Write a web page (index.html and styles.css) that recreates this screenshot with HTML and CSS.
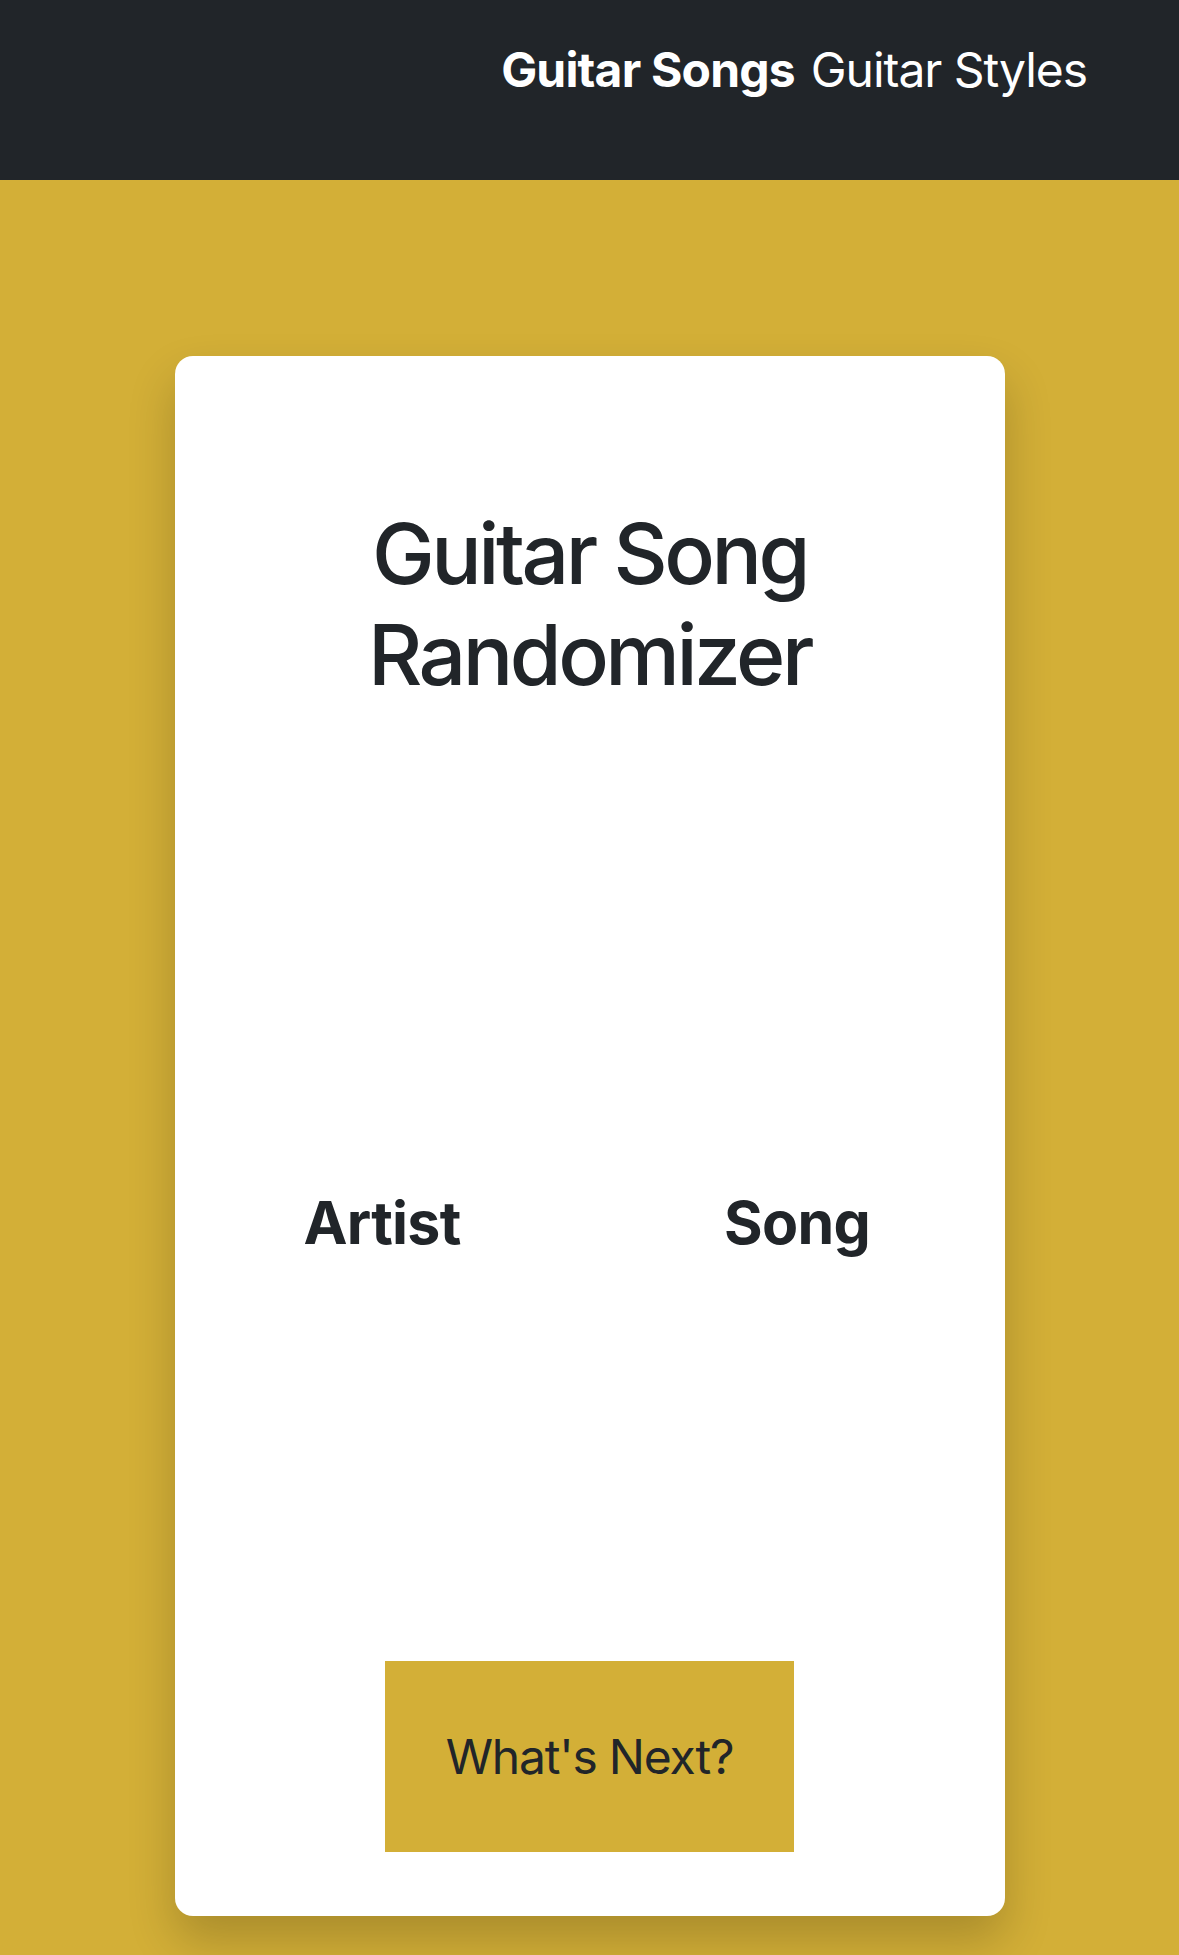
FILE: index.html
```html
<!DOCTYPE html>
<html lang="en">
<head>
<meta charset="utf-8">
<title>Guitar Song Randomizer</title>
<link rel="stylesheet" href="styles.css">
</head>
<body>
<nav class="navbar">
  <a class="brand" href="#">Guitar Songs</a>
  <a class="nav-link" href="#">Guitar Styles</a>
</nav>
<main class="page">
  <section class="card">
    <h1 class="title">Guitar Song Randomizer</h1>
    <div class="result-row">
      <h4 class="result">Artist</h4>
      <h4 class="result">Song</h4>
    </div>
    <button class="next-btn" type="button">What's Next?</button>
  </section>
</main>
</body>
</html>
```
FILE: styles.css
```css
* { box-sizing: border-box; }
html, body {
  margin: 0;
  padding: 0;
}
body {
  background: #d3af37;
  font-family: Inter, "Noto Sans", sans-serif;
  color: #212529;
  min-height: 1955px;
}
.navbar {
  background: #212529;
  height: 180px;
  display: flex;
  justify-content: flex-end;
  align-items: flex-start;
  gap: 16px;
  padding: 34px 92px 0 0;
}
.navbar a {
  color: #ffffff;
  text-decoration: none;
  font-size: 48px;
  line-height: 72px;
}
.brand { font-weight: 700; letter-spacing: -0.017em; }
.nav-link { font-weight: 400; letter-spacing: -0.022em; }
.page {
  padding-top: 176px;
  display: flex;
  justify-content: center;
}
.card {
  width: 830px;
  height: 1560px;
  background: #ffffff;
  border-radius: 18px;
  box-shadow: 0 24px 48px rgba(0, 0, 0, 0.2);
  display: flex;
  flex-direction: column;
  align-items: center;
  padding-top: 148px;
}
.title {
  margin: 0;
  width: 480px;
  text-align: center;
  font-size: 84px;
  line-height: 1.2;
  font-weight: 500;
  letter-spacing: -0.042em;
}
.result-row {
  width: 100%;
  display: grid;
  grid-template-columns: 1fr 1fr;
  margin-top: 482px;
}
.result {
  margin: 0;
  text-align: center;
  font-size: 59px;
  line-height: 1.2;
  font-weight: 700;
  letter-spacing: -0.012em;
}
.next-btn {
  margin-top: 403px;
  width: 409px;
  height: 191px;
  background: #d3af37;
  border: none;
  border-radius: 0;
  color: #212529;
  font-family: inherit;
  font-size: 48px;
  line-height: 72px;
  letter-spacing: -0.025em;
  padding: 0;
}
```
